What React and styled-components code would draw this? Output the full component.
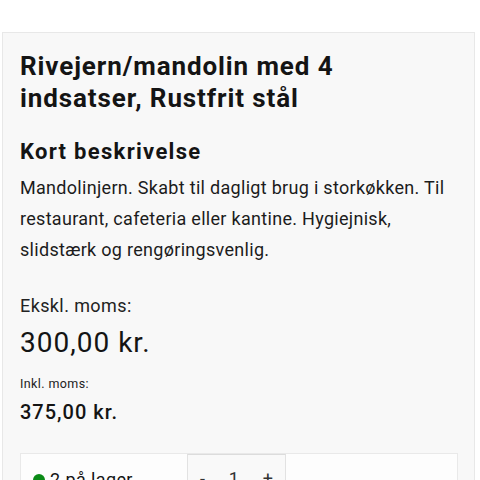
import React from 'react';
import styled, { createGlobalStyle } from 'styled-components';

const GlobalStyle = createGlobalStyle`
    html, body {
        margin: 0;
        padding: 0;
        background: #ffffff;
        font-family: Roboto, "Liberation Sans", sans-serif;
        color: #141414;
    }
`;

const Page = styled.div`
    width: 480px;
    height: 480px;
    overflow: hidden;
    padding-top: 32px;
    box-sizing: border-box;
`;

const Panel = styled.div`
    margin: 0 5px 0 2px;
    background: #f8f8f8;
    border: 1px solid #e8e8e8;
    padding: 17px 16px 0 17px;
    min-height: 500px;
`;

const Title = styled.h1`
    margin: 0;
    font-size: 26px;
    line-height: 32px;
    font-weight: 700;
    letter-spacing: 0.9px;
`;

const SubTitle = styled.h2`
    margin: 24px 0 0 0;
    font-size: 22px;
    line-height: 28px;
    font-weight: 700;
    letter-spacing: 1.3px;
`;

const Description = styled.p`
    margin: 6px 0 0 0;
    font-size: 18px;
    line-height: 31px;
    font-weight: 400;
    letter-spacing: 0.3px;
    color: #1c1c1c;
`;

const PriceLabel = styled.div`
    margin-top: ${p => p.$top}px;
    font-size: ${p => p.$size}px;
    letter-spacing: 0.4px;
    line-height: 1.2;
    color: #222;
`;

const Price = styled.div`
    margin-top: ${p => p.$top}px;
    font-size: ${p => p.$size}px;
    font-weight: ${p => p.$weight};
    letter-spacing: 1px;
    line-height: 1.2;
`;

const StockBox = styled.div`
    margin-top: 29px;
    display: flex;
    height: 60px;
    background: #fdfdfd;
    border: 1px solid #e9e9e9;
`;

const StockCell = styled.div`
    width: 166px;
    display: flex;
    align-items: flex-start;
    padding: 15px 12px;
    box-sizing: border-box;
    font-size: 18px;
    letter-spacing: 0.4px;
    gap: 5px;
`;

const Dot = styled.span`
    flex: none;
    width: 12px;
    height: 12px;
    border-radius: 50%;
    background: #0a8a16;
    margin-top: 5px;
`;

const QtyCell = styled.div`
    width: 97px;
    display: flex;
    justify-content: space-around;
    align-items: flex-start;
    padding-top: 13px;
    background: #f9f9f9;
    border-left: 1px solid #e2e2e2;
    border-right: 1px solid #e2e2e2;
    border-top: 1px solid #dcdcdc;
    font-size: 18px;
    color: #333;
`;

const App = () => (
    <Page>
        <GlobalStyle />
        <Panel>
            <Title>Rivejern/mandolin med 4 indsatser, Rustfrit stål</Title>
            <SubTitle>Kort beskrivelse</SubTitle>
            <Description>
                Mandolinjern. Skabt til dagligt brug i storkøkken. Til restaurant, cafeteria eller kantine. Hygiejnisk, slidstærk og rengøringsvenlig.
            </Description>
            <PriceLabel $top={30} $size={18}>Ekskl. moms:</PriceLabel>
            <Price $top={9} $size={28} $weight={400}>300,00 kr.</Price>
            <PriceLabel $top={17} $size={12.5}>Inkl. moms:</PriceLabel>
            <Price $top={9} $size={20} $weight={500}>375,00 kr.</Price>
            <StockBox>
                <StockCell><Dot />2 på lager</StockCell>
                <QtyCell><span>-</span><span>1</span><span>+</span></QtyCell>
            </StockBox>
        </Panel>
    </Page>
);

export default App;
